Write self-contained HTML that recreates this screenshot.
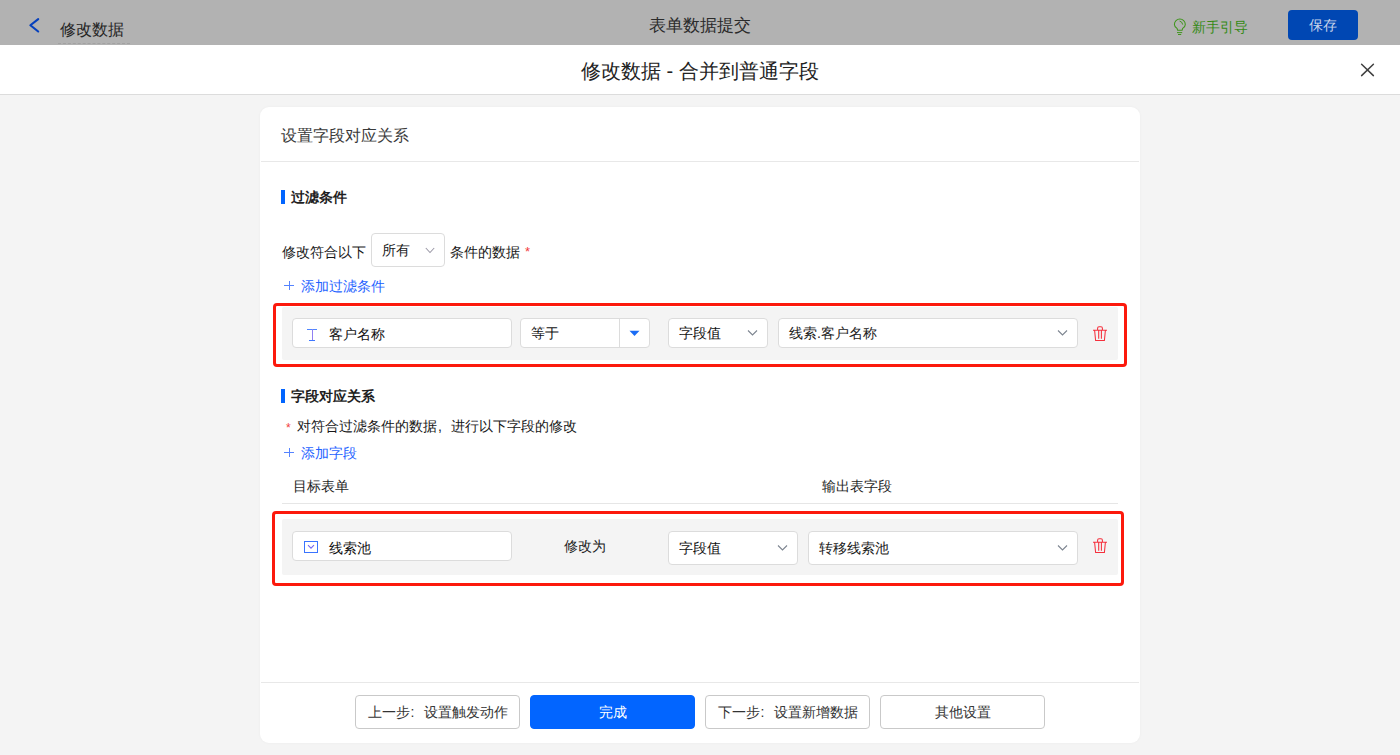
<!DOCTYPE html>
<html><head><meta charset="utf-8">
<style>
*{box-sizing:border-box;margin:0;padding:0}
html,body{width:1400px;height:755px;overflow:hidden;background:#f4f4f4;font-family:"Liberation Sans",sans-serif;color:#333}
.a{position:absolute;white-space:nowrap}
#topbar{position:absolute;left:0;top:0;width:1400px;height:45px;background:#b2b2b2}
#mhead{position:absolute;left:0;top:45px;width:1400px;height:50px;background:#fff;border-bottom:1px solid #dcdcdc}
#card{position:absolute;left:260px;top:107px;width:880px;height:636px;background:#fff;border-radius:9px;box-shadow:0 0 3px rgba(0,0,0,0.04)}
.t14{font-size:14px;line-height:16px}
.box{position:absolute;background:#fff;border:1px solid #dcdcdc;border-radius:4px}
.row{position:absolute;background:#f4f4f4;border-radius:2px}
.red{position:absolute;border:3px solid #fc190c;border-radius:4px}
.btn{position:absolute;top:695px;width:165px;height:34px;border:1px solid #c9c9c9;border-radius:4px;background:#fff;font-size:14px;line-height:32px;text-align:center;color:#333}
.bar{position:absolute;width:4px;height:14px;background:#0265ff}
.blue{color:#1f63ff}
</style></head><body>
<div id="topbar"></div>
<!-- back arrow -->
<svg class="a" style="left:28px;top:17px" width="12" height="17" viewBox="0 0 12 17"><path d="M10.2 2.1 L2.4 8.3 L10.2 14.5" fill="none" stroke="#0640bd" stroke-width="2.1" stroke-linecap="round" stroke-linejoin="round"/></svg>
<div class="a" style="left:60px;top:20px;font-size:16px;line-height:20px;color:#252525">修改数据</div>
<div class="a" style="left:58px;top:43px;width:72px;border-top:1px dashed #a2a2a2"></div>
<div class="a" style="left:649px;top:16px;font-size:17px;line-height:20px;color:#2b2b2b">表单数据提交</div>
<svg class="a" style="left:1173px;top:18px" width="14" height="18" viewBox="0 0 14 18"><path d="M4.6 12.2 L4 10.4 C2.4 9.2 1.4 7.9 1.4 6.4 A5.45 5.45 0 0 1 12.3 6.4 C12.3 7.9 11.3 9.2 9.7 10.4 L9.1 12.2 Z" fill="none" stroke="#3f951c" stroke-width="1.05"/><path d="M4 14.6 H9.2 M5 16.5 H8.2" stroke="#3f951c" stroke-width="1"/><path d="M6.6 3.1 Q9.3 3.6 9.7 6.6" fill="none" stroke="#3f951c" stroke-width="1"/></svg>
<div class="a" style="left:1192px;top:18px;font-size:14px;line-height:18px;color:#358a14">新手引导</div>
<div class="a" style="left:1288px;top:10px;width:70px;height:30px;background:#0047b3;border-radius:4px;color:#c8d4ea;font-size:14px;line-height:30px;text-align:center">保存</div>

<div id="mhead"></div>
<div class="a" style="left:581px;top:59px;font-size:20px;line-height:24px;color:#222">修改数据 - 合并到普通字段</div>
<svg class="a" style="left:1360px;top:63px" width="15" height="15" viewBox="0 0 15 15"><path d="M1.6 1.3 L13.4 12.6 M13.4 1.3 L1.6 12.6" stroke="#404040" stroke-width="1.5" stroke-linecap="round"/></svg>

<div id="card"></div>
<div class="a" style="left:281px;top:127px;font-size:16px;line-height:18px;color:#3a3a3a">设置字段对应关系</div>
<div class="a" style="left:261px;top:161px;width:878px;height:1px;background:#e8e8e8"></div>

<div class="bar" style="left:281px;top:190px"></div>
<div class="a t14" style="left:291px;top:189px;font-weight:bold;color:#1f1f1f">过滤条件</div>

<div class="a t14" style="left:282px;top:244px;color:#181818">修改符合以下</div>
<div class="box" style="left:371px;top:233px;width:74px;height:34px"></div>
<div class="a" style="left:382px;top:242px;font-size:14px;line-height:16px;color:#1a1a1a">所有</div>
<svg class="a" style="left:425px;top:246.5px" width="10" height="7" viewBox="0 0 10 7"><path d="M0.8 1 L5 5.5 L9.2 1" fill="none" stroke="#9a98a6" stroke-width="1.05"/></svg>
<div class="a t14" style="left:450px;top:244px;color:#181818">条件的数据</div>
<div class="a" style="left:525px;top:245px;font-size:13px;line-height:14px;color:#f23c3c">*</div>

<div class="a" style="left:289px;top:281px;width:1px;height:9px;background:#5583ff"></div><div class="a" style="left:284px;top:285px;width:10px;height:1px;background:#5583ff"></div>
<div class="a t14 blue" style="left:301px;top:278px">添加过滤条件</div>

<!-- filter row -->
<div class="row" style="left:282px;top:307px;width:836px;height:53px"></div>
<div class="box" style="left:292px;top:318px;width:220px;height:30px"></div>
<div class="a" style="left:307px;top:329px;width:10px;height:1px;background:#4f86ff"></div><div class="a" style="left:312px;top:329px;width:1px;height:12px;background:#9080f2"></div><div class="a" style="left:309px;top:340px;width:6px;height:1px;background:#3f78ff"></div>
<div class="a t14" style="left:329px;top:326px;color:#111">客户名称</div>
<div class="box" style="left:520px;top:318px;width:130px;height:30px"></div>
<div class="a" style="left:619px;top:319px;width:1px;height:28px;background:#dcdcdc"></div>
<div class="a t14" style="left:531px;top:325px;color:#111">等于</div>
<svg class="a" style="left:629px;top:330px" width="11" height="7" viewBox="0 0 11 7"><path d="M0.5 0.8 H10.5 L5.5 6 Z" fill="#1a6cf5"/></svg>
<div class="box" style="left:668px;top:318px;width:100px;height:30px"></div>
<div class="a t14" style="left:679px;top:325px;color:#111">字段值</div>
<svg class="a" style="left:747px;top:329px" width="11" height="8" viewBox="0 0 11 8"><path d="M1 1.5 L5.5 6 L10 1.5" fill="none" stroke="#7d8590" stroke-width="1.1"/></svg>
<div class="box" style="left:778px;top:318px;width:300px;height:30px"></div>
<div class="a t14" style="left:789px;top:325px;color:#222">线索.客户名称</div>
<svg class="a" style="left:1057px;top:329px" width="11" height="8" viewBox="0 0 11 8"><path d="M1 1.5 L5.5 6 L10 1.5" fill="none" stroke="#7d8590" stroke-width="1.1"/></svg>
<svg class="a" style="left:1092px;top:326px" width="16" height="17" viewBox="0 0 16 17"><path d="M1 4.2 H15 M5.6 4.2 V2.2 C5.6 1.3 6.2 0.8 7 0.8 H9 C9.8 0.8 10.4 1.3 10.4 2.2 V4.2 M2.6 4.2 L3.6 14.5 H12.4 L13.4 4.2 M6.7 4.5 V12.8 M9.4 4.5 V12.8" fill="none" stroke="#f52f3c" stroke-width="1.05"/></svg>
<div class="red" style="left:273px;top:303px;width:854px;height:64px"></div>

<div class="bar" style="left:281px;top:389px"></div>
<div class="a t14" style="left:291px;top:388px;font-weight:bold;color:#1f1f1f">字段对应关系</div>
<div class="a" style="left:286px;top:422px;font-size:12px;line-height:12px;color:#f23c3c">*</div>
<div class="a t14" style="left:297px;top:418px;color:#181818">对符合过滤条件的数据<span style="display:inline-block;width:14px;padding-left:1px;text-align:left">,</span>进行以下字段的修改</div>
<div class="a" style="left:289px;top:448px;width:1px;height:9px;background:#5583ff"></div><div class="a" style="left:284px;top:452px;width:10px;height:1px;background:#5583ff"></div>
<div class="a t14 blue" style="left:301px;top:445px">添加字段</div>
<div class="a t14" style="left:293px;top:478px;color:#1f1f1f">目标表单</div>
<div class="a t14" style="left:822px;top:478px;color:#1f1f1f">输出表字段</div>
<div class="a" style="left:282px;top:503px;width:836px;height:1px;background:#e6e6e6"></div>

<!-- mapping row -->
<div class="row" style="left:282px;top:519px;width:836px;height:56px"></div>
<div class="box" style="left:292px;top:531px;width:220px;height:30px"></div>
<div class="a" style="left:304px;top:541px;width:14px;height:12px;border:1px solid #3a74ff"></div><svg class="a" style="left:307px;top:544px" width="8" height="6" viewBox="0 0 8 6"><path d="M1 1.2 L4 4.2 L7 1.2" fill="none" stroke="#7468f2" stroke-width="1.1"/></svg>
<div class="a t14" style="left:329px;top:540px;color:#111">线索池</div>
<div class="a t14" style="left:564px;top:538px;color:#222">修改为</div>
<div class="box" style="left:668px;top:531px;width:130px;height:34px"></div>
<div class="a t14" style="left:679px;top:540px;color:#111">字段值</div>
<svg class="a" style="left:777px;top:544px" width="11" height="8" viewBox="0 0 11 8"><path d="M1 1.5 L5.5 6 L10 1.5" fill="none" stroke="#7d8590" stroke-width="1.1"/></svg>
<div class="box" style="left:808px;top:531px;width:270px;height:34px"></div>
<div class="a t14" style="left:819px;top:540px;color:#222">转移线索池</div>
<svg class="a" style="left:1057px;top:544px" width="11" height="8" viewBox="0 0 11 8"><path d="M1 1.5 L5.5 6 L10 1.5" fill="none" stroke="#7d8590" stroke-width="1.1"/></svg>
<svg class="a" style="left:1092px;top:538px" width="16" height="17" viewBox="0 0 16 17"><path d="M1 4.2 H15 M5.6 4.2 V2.2 C5.6 1.3 6.2 0.8 7 0.8 H9 C9.8 0.8 10.4 1.3 10.4 2.2 V4.2 M2.6 4.2 L3.6 14.5 H12.4 L13.4 4.2 M6.7 4.5 V12.8 M9.4 4.5 V12.8" fill="none" stroke="#f52f3c" stroke-width="1.05"/></svg>
<div class="red" style="left:272px;top:511px;width:852px;height:75px"></div>

<!-- footer -->
<div class="a" style="left:261px;top:682px;width:878px;height:1px;background:#e8e8e8"></div>
<div class="btn" style="left:355px">上一步<span style="display:inline-block;width:14px;padding-left:1px;text-align:left">:</span>设置触发动作</div>
<div class="btn" style="left:530px;background:#0265ff;border-color:#0265ff;color:#fff">完成</div>
<div class="btn" style="left:705px">下一步<span style="display:inline-block;width:14px;padding-left:1px;text-align:left">:</span>设置新增数据</div>
<div class="btn" style="left:880px">其他设置</div>
</body></html>
